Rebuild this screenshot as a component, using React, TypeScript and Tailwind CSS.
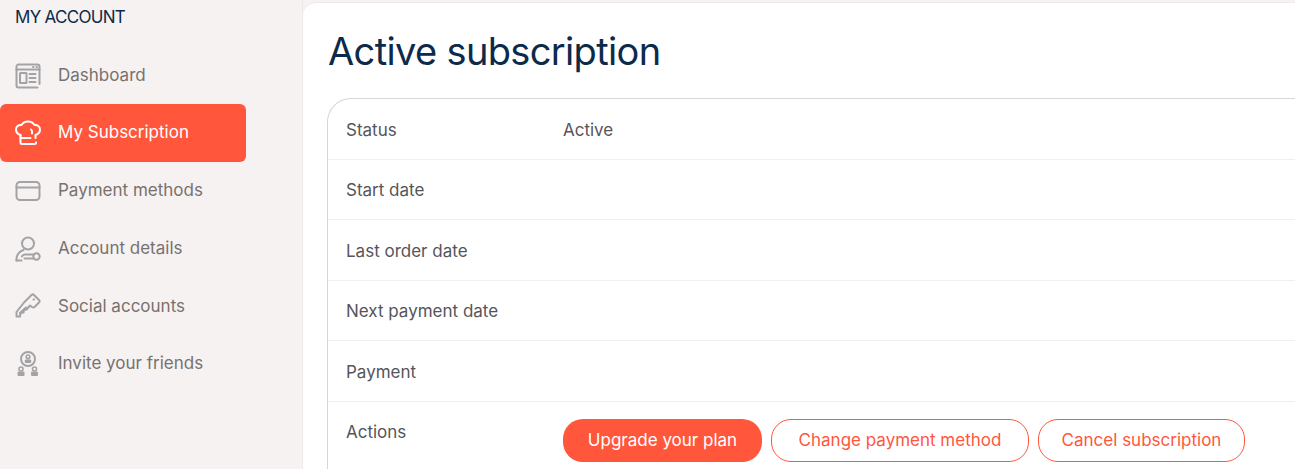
import React from 'react';

const iconProps = {
  width: 26,
  height: 26,
  viewBox: '0 0 26 26',
  fill: 'none',
  stroke: 'currentColor',
  strokeWidth: 2,
  strokeLinecap: 'round' as const,
  strokeLinejoin: 'round' as const,
};

const DashboardIcon = () => (
  <svg {...iconProps}>
    <path d="M24.500 21V3.500a2 2 0 0 0-2-2h-19a2 2 0 0 0-2 2v19a2 2 0 0 0 2 2h19" />
    <path d="M1.500 6.500h23" />
    <path d="M18 4h.5M21.500 4h.5" />
    <rect x="5" y="10" width="6.500" height="10" rx="0.5" />
    <path d="M14.500 11h6M14.500 15h6M14.500 19h6" />
  </svg>
);

const ChefIcon = () => (
  <svg {...iconProps}>
    <path d="M5.500 15C2.500 14 1 12 1 9.500 1 6.500 3.500 4.500 6.500 5 8 2.500 10.500 1.500 13 1.500c2.500 0 5 1 6.500 3.500 3-.5 5.500 1.500 5.500 4.500 0 2.500-1.500 4.500-4.500 5.500v3" />
    <path d="M5.500 15v7.500A1.500 1.500 0 0 0 7 24h12.500a1.500 1.500 0 0 0 1.500-1.500" />
    <path d="M5.500 18h10" />
    <path d="M16 9.500c.6.500 1 1.200 1 2v2" />
  </svg>
);

const CardIcon = () => (
  <svg {...iconProps}>
    <rect x="1.500" y="4" width="23" height="18" rx="3.500" />
    <path d="M1.500 9.500h23" />
  </svg>
);

const AccountIcon = () => (
  <svg {...iconProps}>
    <circle cx="13" cy="7.500" r="6" />
    <path d="M1.500 24.500c-.4-5 2.600-9.500 7-10.500" />
    <path d="M1.500 24.500h5" />
    <path d="M7 20.500c.6-1.500 1.800-2 3-2h8.500" />
    <path d="M9.500 22.500h9" />
    <circle cx="21.500" cy="20.500" r="3.200" />
  </svg>
);

const KeyIcon = () => (
  <svg {...iconProps}>
    <path d="M9 9.500 16.500 2a1.800 1.800 0 0 1 2.500 0l5 5a1.800 1.800 0 0 1 0 2.500l-4.500 4.500a2 2 0 0 1-2.500 0l-2-1.500-3.500 4-2.500.500-.5 2.500-3 .500-.5 3.500H1.500v-4.500Z" />
    <path d="M18.500 6.500h.5" />
    <path d="M5 20l6-5.500" />
  </svg>
);

const FriendsIcon = () => (
  <svg width="26" height="26" viewBox="0 0 26 26" fill="none">
    <circle cx="13" cy="8" r="7" stroke="currentColor" strokeWidth="2" />
    <circle cx="13" cy="5.800" r="1.800" stroke="currentColor" strokeWidth="1.600" />
    <rect x="9.800" y="8.500" width="6.400" height="3.500" rx="1" fill="currentColor" />
    <circle cx="6" cy="18" r="2" stroke="currentColor" strokeWidth="1.600" />
    <rect x="2.500" y="20.500" width="7" height="4.500" rx="1" fill="currentColor" />
    <circle cx="19.500" cy="18" r="2" stroke="currentColor" strokeWidth="1.600" />
    <rect x="16" y="20.500" width="7" height="4.500" rx="1" fill="currentColor" />
  </svg>
);

const navItems = [
  { name: 'Dashboard', icon: <DashboardIcon /> },
  { name: 'My Subscription', icon: <ChefIcon />, active: true },
  { name: 'Payment methods', icon: <CardIcon /> },
  { name: 'Account details', icon: <AccountIcon /> },
  { name: 'Social accounts', icon: <KeyIcon /> },
  { name: 'Invite your friends', icon: <FriendsIcon /> },
];

const rows = [
  { label: 'Status', value: 'Active' },
  { label: 'Start date', value: '' },
  { label: 'Last order date', value: '' },
  { label: 'Next payment date', value: '' },
  { label: 'Payment', value: '' },
];

export default function App() {
  return (
    <div className="flex h-[469px] w-[1295px] overflow-hidden bg-[#f6f2f1] font-['Inter',sans-serif]">
      <aside className="w-[303px] shrink-0 border-r border-[#eeeaea]">
        <h2 className="pl-[15px] pt-[7px] text-[17px] leading-[20px] tracking-[-0.7px] text-[#0d2a4a]">MY ACCOUNT</h2>
        <nav className="mt-[19.4px] flex w-[246px] flex-col">
          {navItems.map((item) => (
            <a
              key={item.name}
              className={`flex h-[57.7px] items-center gap-[17px] pl-[15px] pt-[0.6px] text-[17px] ${
                item.active ? 'rounded-[6px] bg-[#ff563c] text-white' : 'text-[#78716f]'
              }`}
            >
              <span className={item.active ? 'text-white' : 'text-[#a3a3a5]'}>{item.icon}</span>
              {item.name}
            </a>
          ))}
        </nav>
      </aside>

      <main className="mt-[2px] flex-1 rounded-tl-[14px] border-t border-[#eeeaea] bg-white pl-[24px]">
        <h1 className="pl-[1px] pt-[22px] text-[38px] leading-[52px] tracking-[-0.65px] text-[#0d2a4a]">Active subscription</h1>
        <div className="mt-[21px] rounded-tl-[24px] border-l border-t border-[#d5d5da]">
          {rows.map((row) => (
            <div key={row.label} className="flex h-[60.500px] items-center border-b border-[#f0f0f2] pl-[18px] pt-[3px] text-[17px] text-[#55555a]">
              <span className="w-[217px]">{row.label}</span>
              <span>{row.value}</span>
            </div>
          ))}
          <div className="flex pb-[20px] pl-[18px] text-[17px] text-[#55555a]">
            <span className="w-[217px] pt-[18px]">Actions</span>
            <div className="flex gap-[9px] pt-[17px]">
              <button className="h-[43px] w-[199px] rounded-[20px] bg-[#ff563c] pt-[1px] text-white">Upgrade your plan</button>
              <button className="h-[43px] w-[258px] rounded-[20px] border border-[#ff563c] pt-[1px] text-[#ff563c]">Change payment method</button>
              <button className="h-[43px] w-[207px] rounded-[20px] border border-[#ff563c] pt-[1px] text-[#ff563c]">Cancel subscription</button>
            </div>
          </div>
        </div>
      </main>
    </div>
  );
}
